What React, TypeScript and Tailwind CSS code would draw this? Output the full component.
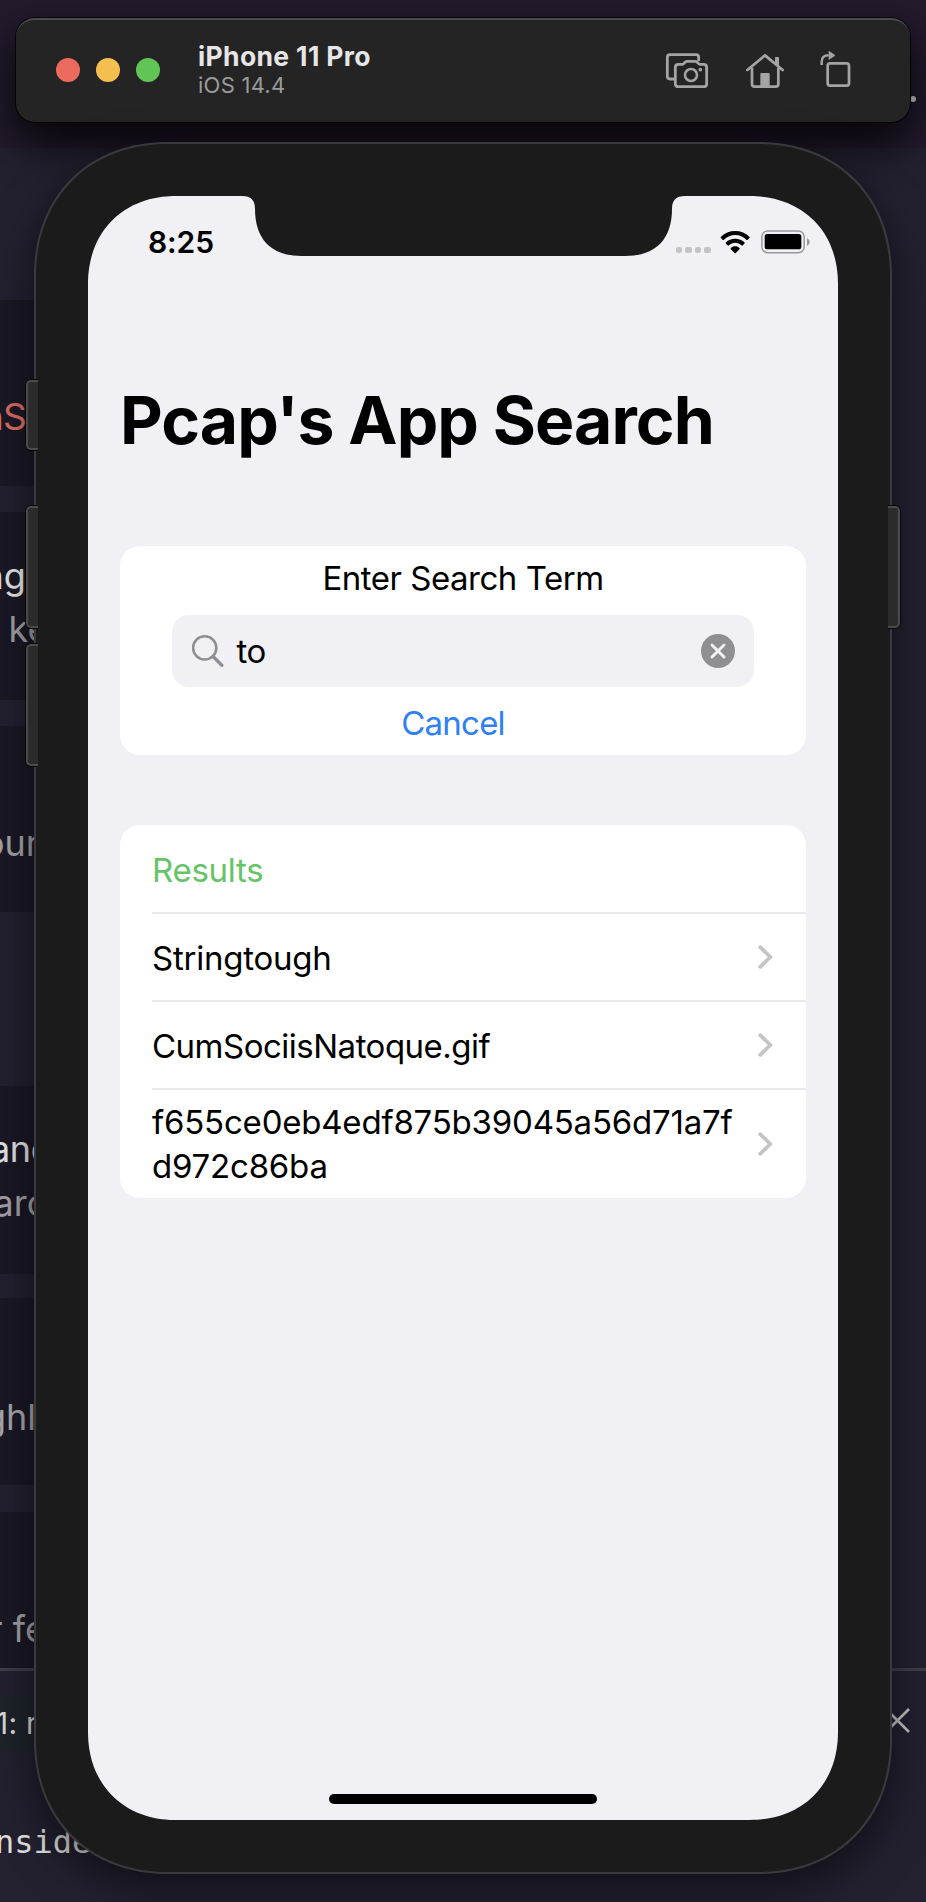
import type { ReactNode } from "react";

const SANS = "font-['Inter','Liberation_Sans',sans-serif]";

function Backdrop() {
  const line = "text-[36px] leading-[44px] whitespace-nowrap";
  return (
    <div className="absolute inset-0 flex flex-col overflow-hidden bg-[#232030]">
      <div className="flex h-[148px] shrink-0 justify-end bg-[#231a2c] pt-[96px] pr-[10.5px]">
        <span className="size-[6px] rounded-full bg-[#dcdcdc]" />
      </div>
      <div className="h-[152px] shrink-0" />
      <div className="h-[186px] w-[463px] shrink-0 bg-[#1a1825] pt-[95px]">
        <p className={`${line} -ml-[18px] text-[37px] tracking-[-0.8px] text-[#d86c63]`}>nS</p>
      </div>
      <div className="mt-[26px] h-[188px] w-[463px] shrink-0 bg-[#1a1825] pt-[42px]">
        <p className={`${line} -ml-[17.5px] text-[#e4e4e4]`}>ng</p>
        <p className={`${line} mt-[9px] ml-[8.5px] text-[#a09fa4]`}>ke</p>
      </div>
      <div className="mt-[26px] h-[186px] w-[463px] shrink-0 bg-[#1a1825] pt-[95px]">
        <p className={`${line} -ml-[17px] text-[#a3a2a6]`}>our</p>
      </div>
      <div className="mt-[174px] h-[188px] w-[463px] shrink-0 bg-[#1a1825] pt-[41px]">
        <p className={`${line} -ml-[10px] tracking-[-0.4px] text-[#e4e4e4]`}>and</p>
        <p className={`${line} mt-[10px] -ml-[6.5px] text-[#a3a2a6]`}>arc</p>
      </div>
      <div className="mt-[24px] h-[187px] w-[463px] shrink-0 bg-[#1a1825] pt-[97px]">
        <p className={`${line} -ml-[16px] text-[#a8a7ab]`}>ghl</p>
      </div>
      <div className="mt-[27px] h-[156px] w-[463px] shrink-0 bg-[#1a1825] pt-[95px]">
        <p className={`${line} -ml-[11px] text-[#a3a2a6]`}>r fe</p>
      </div>
      <div className="h-[3px] shrink-0 bg-[#3e3d48]" />
      <div className="flex h-[231px] shrink-0 justify-between">
        <div className="flex flex-col pt-[24px]">
          <div className="w-[463px] bg-[#1e232b]">
            <p className="-ml-[4px] text-[30px] leading-[56px] tracking-[0.2px] whitespace-pre text-[#dadada]">1: r</p>
          </div>
          <p className="mt-[71px] -ml-[5px] font-['DejaVu_Sans_Mono',monospace] text-[32px] leading-[40px] text-[#deded9]">
            nside
          </p>
        </div>
        <svg className="mt-[37px] mr-[16px] size-[25px]" viewBox="0 0 25 25" fill="none" stroke="#c4c3c6" strokeWidth="2.6">
          <path d="M1 1 24 24M24 1 1 24" />
        </svg>
      </div>
    </div>
  );
}

function CameraIcon() {
  return (
    <svg className="h-[37px] w-[44px]" viewBox="606 153 132 111" fill="none" stroke="#a4a4a4" strokeWidth="8.4" strokeLinejoin="round">
      <path d="M634 234H621Q613 234 613 226V169Q613 161 621 161H699Q707 161 707 169V180" />
      <path d="M637 199Q637 190 646 190H658Q661 190 664 186L667 183Q669 181 673 181H696Q700 181 702 183L705 186Q708 190 711 190H722Q731 190 731 199V248Q731 257 722 257H646Q637 257 637 248Z" />
      <circle cx="684" cy="222" r="18" strokeWidth="7.6" />
      <circle cx="712" cy="206" r="5.4" fill="#a4a4a4" stroke="none" />
    </svg>
  );
}

function HomeIcon() {
  return (
    <svg className="h-[37px] w-[40px]" viewBox="846 153 120 111" fill="none" stroke="#a4a4a4" strokeWidth="8.2" strokeLinecap="round" strokeLinejoin="round">
      <path d="M853 207 906 163 959 207" />
      <path d="M867 200V249Q867 257 875 257H938Q946 257 946 249V200" strokeLinecap="butt" />
      <path d="M936 170Q936 168 938 168H946Q948 168 948 170V198L936 188Z" fill="#a4a4a4" stroke="none" />
      <path d="M892 258V219Q892 216 895 216H917Q920 216 920 219V258Z" fill="#a4a4a4" stroke="none" />
    </svg>
  );
}

function RotateIcon() {
  return (
    <svg className="h-[38px] w-[34px]" viewBox="1070 150 102 114" fill="none" stroke="#a4a4a4" strokeWidth="8.2">
      <rect x="1096" y="190" width="64" height="67" rx="7" />
      <path d="M1078 195V186Q1078 166 1099 166" strokeWidth="7.6" />
      <path d="M1099 154.500Q1099 152 1101.500 153.500L1117 164Q1119 166 1117 168L1101.500 178.500Q1099 180 1099 177.500Z" fill="#a4a4a4" stroke="none" />
    </svg>
  );
}

function TitleBar() {
  return (
    <header className="ml-4 flex h-[104px] w-[894px] shrink-0 items-center rounded-[19px] border-t-2 border-[#4c4c4c] bg-[#242424] pb-[2px] pl-10 shadow-[0_0_0_1px_#050505,0_20px_44px_rgba(0,0,0,0.85)]">
      <div className="flex gap-4">
        <span className="size-6 rounded-full bg-[#ed6a5f]" />
        <span className="size-6 rounded-full bg-[#f5bf4f]" />
        <span className="size-6 rounded-full bg-[#61c555]" />
      </div>
      <div className="ml-[38px] flex flex-col pb-[2px]">
        <h1 className="text-[26.5px] leading-[32px] font-bold tracking-[0.35px] text-[#e6e6e6]">iPhone 11 Pro</h1>
        <p className="text-[22px] leading-[26px] tracking-[0.25px] text-[#9b9b9b]">iOS 14.4</p>
      </div>
      <div className="mr-[57px] ml-auto flex items-center">
        <CameraIcon />
        <span className="ml-[36px] flex">
          <HomeIcon />
        </span>
        <span className="ml-[34px] flex pb-[3px]">
          <RotateIcon />
        </span>
      </div>
    </header>
  );
}

function StatusBar() {
  return (
    <div className="flex h-[60px] justify-between pl-[60px]">
      <span className="pt-[28px] text-[30px] leading-[36px] font-semibold tracking-[-0.1px]">8:25</span>
      <div className="flex items-start pt-[34px] pr-[28.5px]">
        <div className="mt-[16.500px] flex gap-[3.300px]">
          <span className="size-[6.200px] rounded-[2px] bg-[#c4c4c8]" />
          <span className="size-[6.200px] rounded-[2px] bg-[#c4c4c8]" />
          <span className="size-[6.200px] rounded-[2px] bg-[#c4c4c8]" />
          <span className="size-[6.200px] rounded-[2px] bg-[#c4c4c8]" />
        </div>
        <svg className="ml-[9.500px] h-[24px] w-[30px]" viewBox="771 688 91 72">
          <path d="M817 691C834 691 849 697 860 708Q862 710 860 712L855 717Q853 719 851 717C842 708 830 703 817 703S792 708 783 717Q781 719 779 717L774 712Q772 710 774 708C785 697 800 691 817 691Z" />
          <path d="M817 714C828 714 838 718 845 725Q847 727 845 729L840 734Q838 736 836 734C831 729 824 726 817 726S803 729 798 734Q796 736 794 734L789 729Q787 727 789 725C796 718 806 714 817 714Z" />
          <path d="M817 737C822 737 827 739 830 742Q832 744 830 746L819 757Q817 759 815 757L804 746Q802 744 804 742C807 739 812 737 817 737Z" />
        </svg>
        <svg className="ml-[10.500px] h-[24px] w-[49px]" viewBox="893 690 147 72">
          <rect x="895.500" y="693" width="127" height="65" rx="17" fill="none" stroke="#98989c" strokeWidth="4.500" />
          <rect x="904" y="702" width="110" height="46" rx="8" />
          <path d="M1031 714Q1039 718 1039 726T1031 738Z" fill="#98989c" />
        </svg>
      </div>
    </div>
  );
}

function Chevron() {
  return (
    <svg className="h-[24px] w-[15px] shrink-0" viewBox="0 0 15 24" fill="none" stroke="#c4c4c6" strokeWidth="3.800" strokeLinecap="round" strokeLinejoin="round">
      <path d="M2.200 2.200 12.400 12 2.200 21.800" />
    </svg>
  );
}

function Row({ children, last = false }: { children: ReactNode; last?: boolean }) {
  return (
    <li className={last ? "ml-8 flex h-[108px] items-center pr-[33.500px] pb-px" : "ml-8 flex h-[88px] items-center border-b-2 border-[#e9e9eb] pr-[33.500px]"}>
      {children}
      <span className="ml-auto flex">
        <Chevron />
      </span>
    </li>
  );
}

function SearchCard() {
  return (
    <section className="mx-8 mt-[86px] flex h-[209px] flex-col items-center rounded-[20px] bg-white pt-[10px] text-[33px] leading-[44px]">
      <p className="tracking-[-0.480px]">Enter Search Term</p>
      <div className="mt-[15px] flex h-[72px] w-[582px] items-center rounded-[17px] bg-[#f1f0f5] pr-[19px] pb-px pl-[20px]">
        <svg className="size-[32px]" viewBox="0 0 32 32" fill="none" stroke="#8e8e93" strokeLinecap="round">
          <circle cx="12.700" cy="12.900" r="11.600" strokeWidth="2.600" />
          <path d="M21.300 21.700 29.800 30.200" strokeWidth="3.400" />
        </svg>
        <span className="ml-[12.500px] pt-px tracking-[-0.500px]">to</span>
        <svg className="ml-auto size-[34px]" viewBox="0 0 34 34">
          <circle cx="17" cy="17" r="17" fill="#8e8e93" />
          <path d="M11 11 23 23M23 11 11 23" stroke="#f1f0f5" strokeWidth="3" strokeLinecap="round" />
        </svg>
      </div>
      <p className="mt-[14px] pr-[20px] tracking-[-0.750px] text-[#2f7ff6]">Cancel</p>
    </section>
  );
}

function ResultsCard() {
  return (
    <section className="mx-8 mt-[70px] h-[373px] rounded-[20px] bg-white text-[33px] leading-[44px]">
      <h3 className="ml-8 flex h-[89px] items-center border-b-2 border-[#e9e9eb] pt-[2px] tracking-[-0.280px] text-[#65c466]">Results</h3>
      <ul>
        <Row>
          <span className="pt-[2px] tracking-[-0.240px]">Stringtough</span>
        </Row>
        <Row>
          <span className="pt-[2px] tracking-[-0.500px]">CumSociisNatoque.gif</span>
        </Row>
        <Row last>
          <span className="w-[590px] tracking-[-0.210px] break-all">f655ce0eb4edf875b39045a56d71a7fd972c86ba</span>
        </Row>
      </ul>
    </section>
  );
}

function SideButton({ className }: { className: string }) {
  return <span className={`absolute w-[12px] border-2 border-[#4b4b4b] bg-[#2b2b2b] shadow-[0_0_0_1px_#08080a] ${className}`} />;
}

function Phone() {
  return (
    <main className="relative mt-5 ml-[34px] h-[1732px] w-[858px] shrink-0 rounded-[134px] border-2 border-[#3a3a3e] bg-[#1b1b1b] p-[52px] shadow-[0_14px_44px_rgba(0,0,0,0.55)] [corner-shape:superellipse(1.1)]">
      <SideButton className="top-[236px] -left-[10px] h-[70px] rounded-l-[5px] border-r-0 [clip-path:inset(-1px_0_-1px_-1px)]" />
      <SideButton className="top-[362px] -left-[10px] h-[122px] rounded-l-[5px] border-r-0 [clip-path:inset(-1px_0_-1px_-1px)]" />
      <SideButton className="top-[500px] -left-[10px] h-[122px] rounded-l-[5px] border-r-0 [clip-path:inset(-1px_0_-1px_-1px)]" />
      <SideButton className="top-[362px] -right-[10px] h-[122px] rounded-r-[5px] border-l-0 [clip-path:inset(-1px_-1px_-1px_0)]" />
      <div className="relative flex h-[1624px] w-[750px] flex-col overflow-hidden rounded-[88px] bg-[#f1f0f5] text-black [corner-shape:superellipse(1.1)]">
        <svg className="absolute top-0 left-[154px] h-[60px] w-[443px]" viewBox="0 0 443 60" fill="#1b1b1b">
          <path d="M0 0C9 0 13 4 13 13C13 42 28 60 60 60H383C415 60 430 42 430 13C430 4 434 0 443 0Z" />
        </svg>
        <StatusBar />
        <h2 className="mt-[124px] ml-[32px] text-[66px] leading-[80px] font-bold tracking-[-0.920px] whitespace-nowrap">Pcap's App Search</h2>
        <SearchCard />
        <ResultsCard />
        <div className="mx-auto mt-auto mb-[16px] h-[10px] w-[268px] rounded-full bg-black" />
      </div>
    </main>
  );
}

export default function App() {
  return (
    <div className={`${SANS} relative h-[1902px] w-[926px] overflow-hidden`}>
      <Backdrop />
      <div className="relative flex h-full flex-col pt-[18px]">
        <TitleBar />
        <Phone />
      </div>
    </div>
  );
}
